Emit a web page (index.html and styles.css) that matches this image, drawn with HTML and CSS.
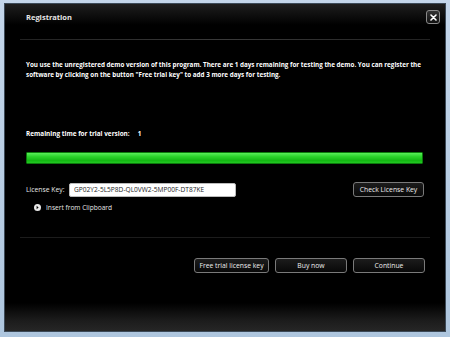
FILE: index.html
```html
<!DOCTYPE html>
<html lang="en">
<head>
  <meta charset="UTF-8" />
  <title>Registration</title>
  <link rel="stylesheet" href="styles.css">
</head>
<body>
  <div class="window">
    <div class="titlebar">
      <span class="title">Registration</span>
      <button class="close" type="button">
        <svg width="7" height="7" viewBox="0 0 7 7"><path d="M1 1 L6 6 M6 1 L1 6" stroke="#fff" stroke-width="1.6" stroke-linecap="round"/></svg>
      </button>
    </div>
    <div class="rule"></div>

    <div class="content">
      <p class="intro">You use the unregistered demo version of this program. There are 1 days remaining for testing the demo. You can register the software by clicking on the button "Free trial key" to add 3 more days for testing.</p>

      <p class="remaining">Remaining time for trial version:<span class="days">1</span></p>

      <div class="progress"><div class="progress-fill" style="width: 100%"></div></div>

      <div class="key-row">
        <label class="key-label">License Key:</label>
        <input class="key-input" type="text" value="GP02Y2-5L5P8D-QL0VW2-5MP00F-DT87KE" />
        <button class="btn check" type="button">Check License Key</button>
      </div>

      <div class="clipboard">
        <span class="bullet">
          <svg width="7" height="7" viewBox="0 0 7 7"><circle cx="3.5" cy="3.5" r="3.5" fill="#e8e8e8"/><path d="M2.6 1.8 L4.6 3.5 L2.6 5.2 Z" fill="#000"/></svg>
        </span>
        Insert from Clipboard
      </div>
    </div>

    <div class="rule lower"></div>

    <div class="actions">
      <button class="btn trial" type="button">Free trial license key</button>
      <button class="btn" type="button">Buy now</button>
      <button class="btn" type="button">Continue</button>
    </div>

    <div class="footer"></div>
  </div>
</body>
</html>
```

FILE: styles.css
```css
html, body {
  height: 100%;
}
body {
  margin: 0;
  background: linear-gradient(#c4d6ea, #aec6de);
  font-family: 'Open Sans', 'DejaVu Sans', sans-serif;
  color: #f2f2f2;
  overflow: hidden;
}
.window {
  margin: 3px 4px 0 4px;
  height: 329px;
  box-sizing: border-box;
  background: #000;
  border: 1px solid #3c4a58;
  display: flex;
  flex-direction: column;
}
.titlebar {
  height: 35px;
  box-sizing: border-box;
  display: flex;
  align-items: center;
  justify-content: space-between;
  padding: 0 5px 9px 21px;
  background: linear-gradient(#1e1e1e, #000 60%);
}
.title {
  font-size: 7.5px;
  font-weight: bold;
  color: #e6e6e6;
}
.close {
  width: 14px;
  height: 14px;
  padding: 0;
  border: 1px solid #8a8a8a;
  border-radius: 3px;
  background: linear-gradient(#333, #111);
  display: flex;
  align-items: center;
  justify-content: center;
}
.rule {
  height: 1px;
  margin: 0 15px;
  background: linear-gradient(90deg, #222, #3a3a3a 50%, #222);
}
.content {
  padding: 0 21px;
}
.intro {
  margin: 20px 0 0;
  font-size: 6.3px;
  line-height: 10px;
  font-weight: bold;
  color: #fff;
}
.remaining {
  margin: 49px 0 0;
  font-size: 6.4px;
  line-height: 10px;
  font-weight: bold;
  color: #fff;
}
.days {
  margin-left: 8px;
}
.progress {
  margin: 13px 1px 0 0;
  height: 10px;
  border: 1px solid #0c7a0c;
  border-radius: 1px;
  background: #0a3a0a;
}
.progress-fill {
  height: 100%;
  background: linear-gradient(#59ee59, #2cd42c 35%, #14b814 75%, #22c822);
}
.key-row {
  margin-top: 18px;
  display: flex;
  align-items: center;
}
.key-label {
  font-size: 6.8px;
  width: 43px;
  color: #e6e6e6;
}
.key-input {
  width: 167px;
  height: 14px;
  box-sizing: border-box;
  padding: 0 4px;
  border: 1px solid #bbb;
  border-radius: 2px;
  background: #fff;
  color: #222;
  font-family: 'Open Sans', 'DejaVu Sans', sans-serif;
  font-size: 6.6px;
}
.btn {
  height: 15px;
  width: 72px;
  padding: 0;
  border: 1px solid #7a7a7a;
  border-radius: 3px;
  background: linear-gradient(#1c1c1c, #080808);
  color: #eee;
  font-family: 'Open Sans', 'DejaVu Sans', sans-serif;
  font-size: 6.8px;
}
.check {
  margin-left: auto;
  width: 71px;
}
.clipboard {
  margin: 6px 0 0 8px;
  display: flex;
  align-items: center;
  gap: 5px;
  font-size: 6.6px;
  color: #e6e6e6;
}
.bullet {
  display: flex;
}
.rule.lower {
  margin-top: 25px;
  background: #1c1c1c;
}
.actions {
  margin-top: 20px;
  display: flex;
  justify-content: flex-end;
  gap: 6px;
  padding-right: 20px;
}
.trial {
  width: 75px;
}
.footer {
  margin-top: auto;
  height: 28px;
  background: linear-gradient(#000, #1b1b1b 60%, #262626);
}
```
